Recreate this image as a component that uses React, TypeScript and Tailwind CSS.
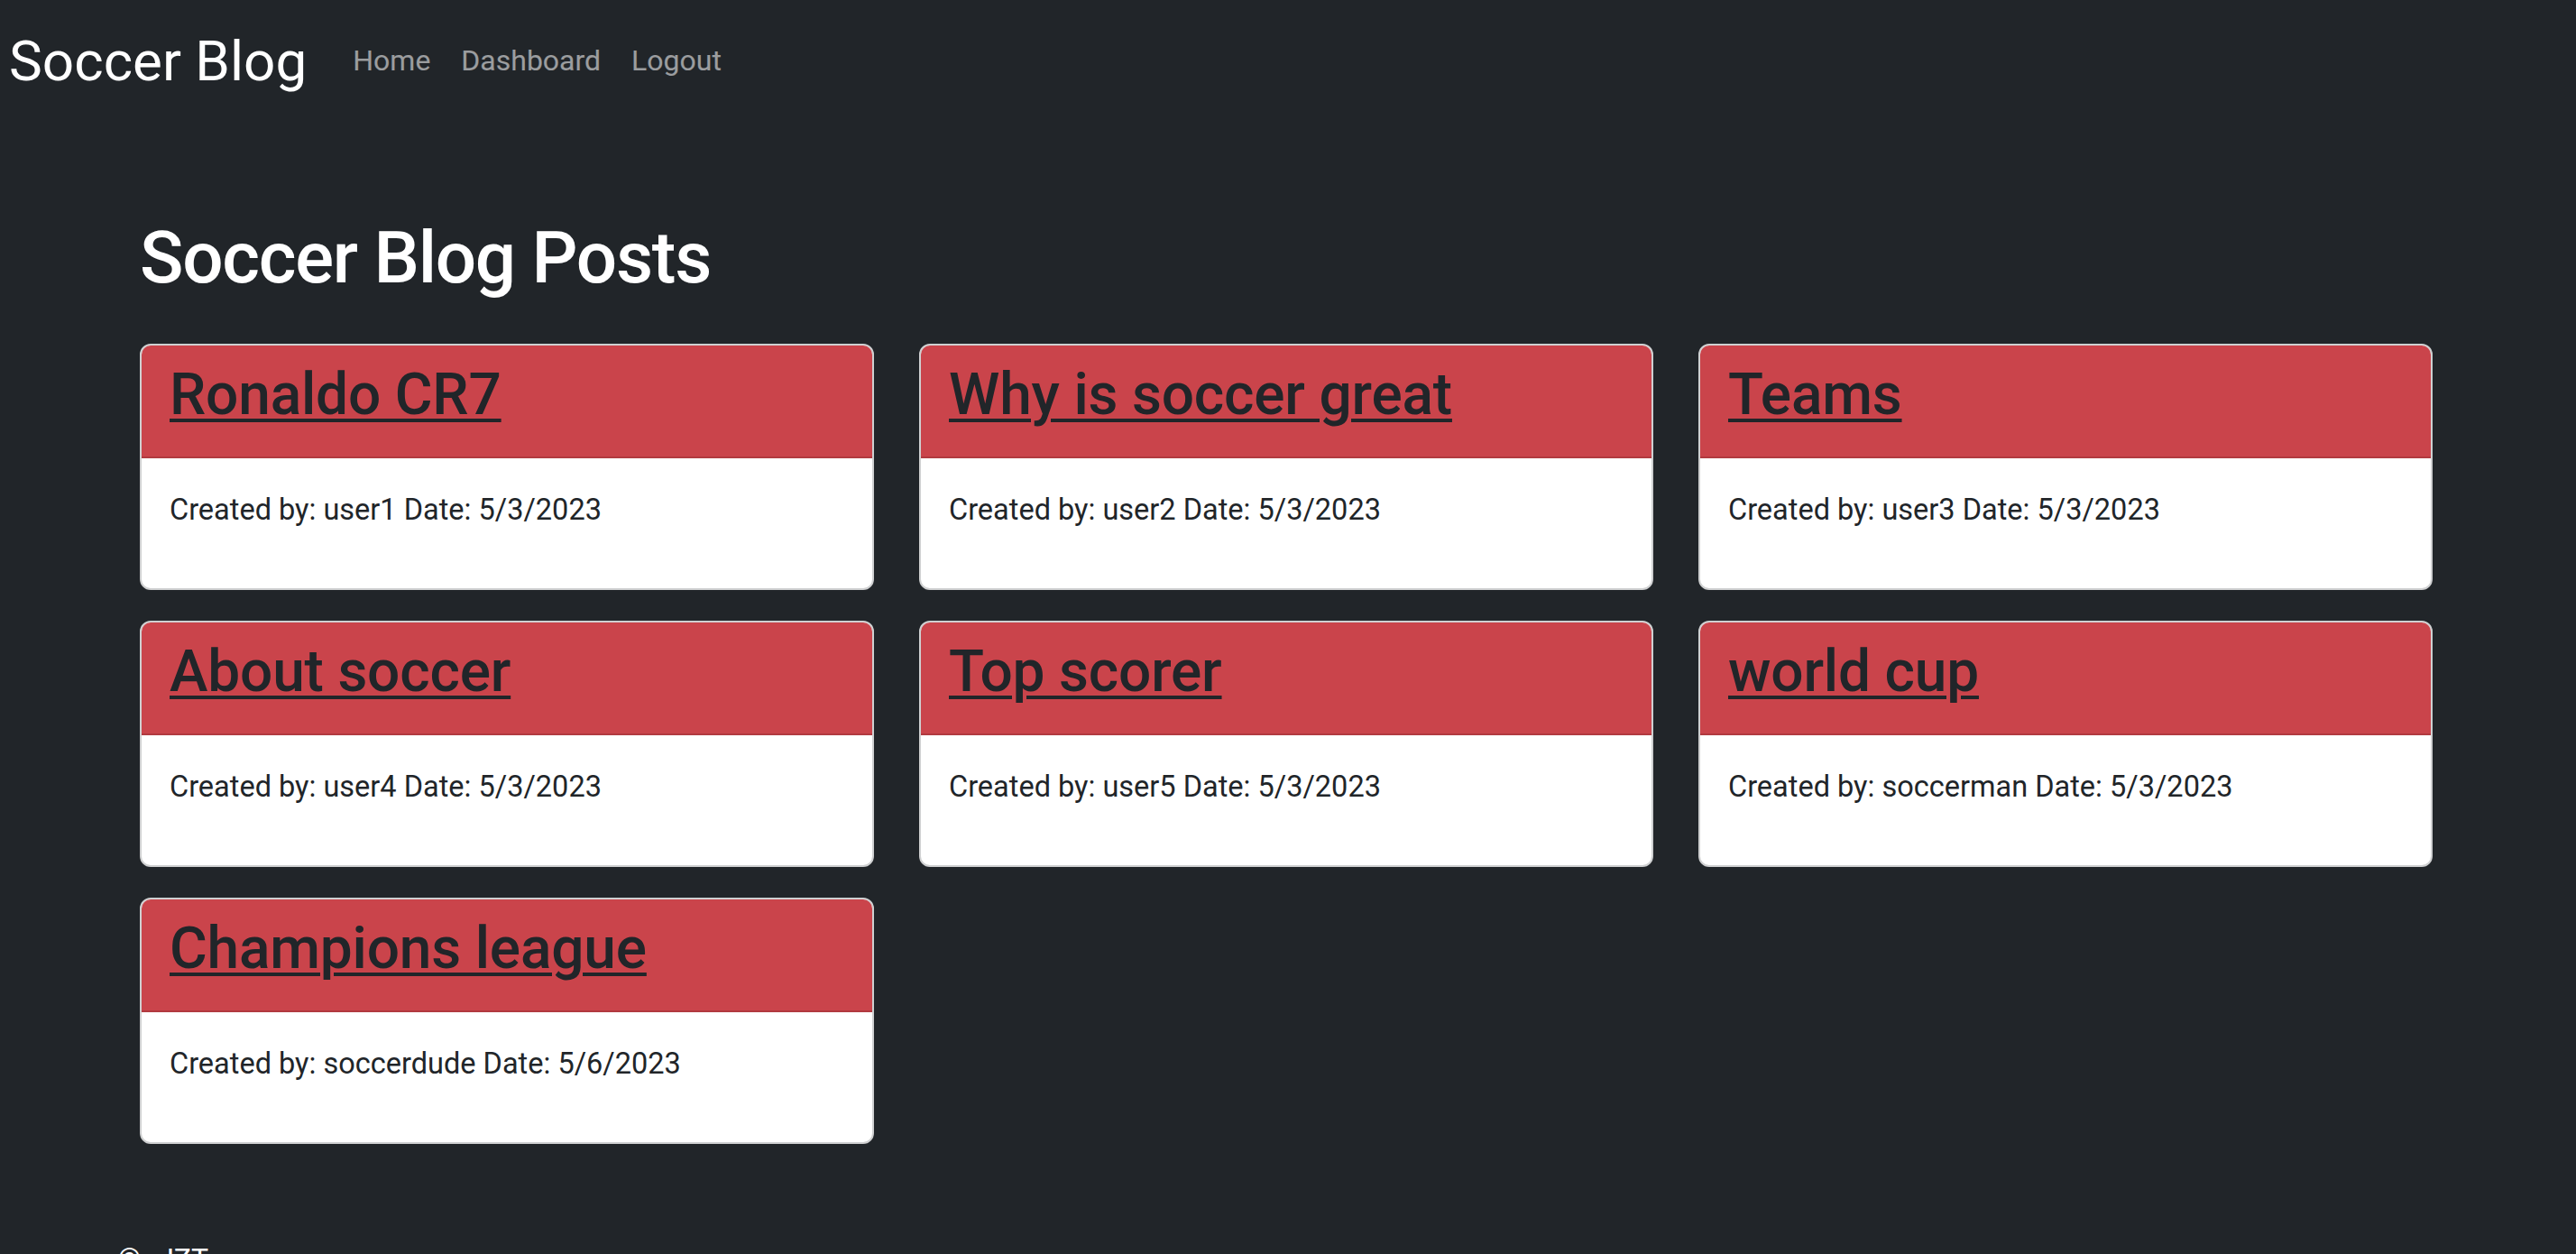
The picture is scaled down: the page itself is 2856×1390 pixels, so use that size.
import React from 'react'

const posts = [
  { title: 'Ronaldo CR7', author: 'user1', date: '5/3/2023' },
  { title: 'Why is soccer great', author: 'user2', date: '5/3/2023' },
  { title: 'Teams', author: 'user3', date: '5/3/2023' },
  { title: 'About soccer', author: 'user4', date: '5/3/2023' },
  { title: 'Top scorer', author: 'user5', date: '5/3/2023' },
  { title: 'world cup', author: 'soccerman', date: '5/3/2023' },
  { title: 'Champions league', author: 'soccerdude', date: '5/6/2023' },
]

const font = { fontFamily: 'Roboto, "Liberation Sans", sans-serif' }

function PostCard({ title, author, date }: { title: string; author: string; date: string }) {
  return (
    <div className="overflow-hidden rounded-[12px] border-2 border-[#cfd0d1] bg-white">
      <div className="border-b-2 border-[#b13a40] bg-[#ca444b] px-[31px] pt-[16px] pb-[30px]">
        <h2 className="text-[64px] leading-[77px] font-medium tracking-[-0.003em] text-[#212529]">
          <a href="#" className="underline decoration-4 underline-offset-[5px]">
            {title}
          </a>
        </h2>
      </div>
      <div className="px-[31px] pt-[33px] pb-[63px]">
        <p className="text-[32.5px] leading-[48px] text-[#212529]">
          Created by: {author} Date: {date}
        </p>
      </div>
    </div>
  )
}

export default function App() {
  return (
    <div className="min-h-screen bg-[#212529] text-white" style={font}>
      {/* Navbar */}
      <nav className="flex h-[134px] items-center pl-[10px]">
        <a href="#" className="mr-[34px] text-[62px] leading-[93px] text-white">
          Soccer Blog
        </a>
        {['Home', 'Dashboard', 'Logout'].map((label) => (
          <a key={label} href="#" className="px-[17px] text-[32px] leading-[48px] text-white/55">
            {label}
          </a>
        ))}
      </nav>

      {/* Posts */}
      <main className="pt-[104px] pr-[159px] pl-[155px]">
        <h1 className="mb-[47px] text-[80px] leading-[96px] font-medium tracking-[-0.016em] text-white">
          Soccer Blog Posts
        </h1>
        <div className="grid grid-cols-3 gap-x-[50px] gap-y-[34px]">
          {posts.map((p) => (
            <PostCard key={p.title} {...p} />
          ))}
        </div>
      </main>

      <footer className="pt-[103px] pb-[40px] pl-[131px]">
        <p className="text-[32px] leading-[48px] text-white">
          <span className="mr-[19px]">©</span>JZT
        </p>
      </footer>
    </div>
  )
}
